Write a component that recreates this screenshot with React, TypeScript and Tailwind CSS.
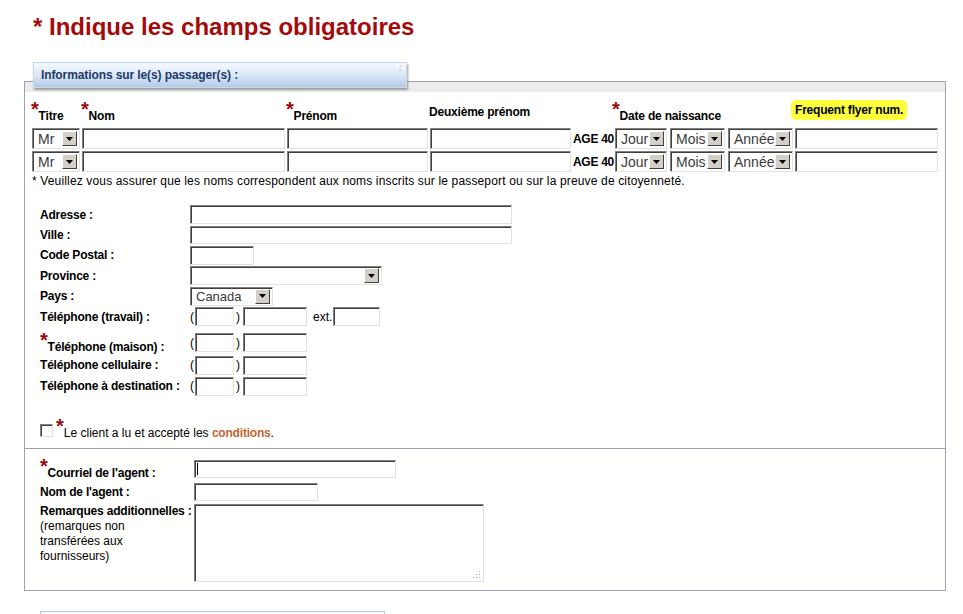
import React from 'react';

function Star() {
  return <span className="text-[#9b0a0a] font-bold text-[20px] leading-[14px] h-[14px]">*</span>;
}

function Req({ text, gap = 'mt-[7px]' }: { text: string; gap?: string }) {
  return (
    <div className="flex items-start whitespace-nowrap">
      <Star />
      <span className={gap}>{text}</span>
    </div>
  );
}

function Box({ className = '', caret = false }: { className?: string; caret?: boolean }) {
  return (
    <div
      className={`bg-white border border-t-[#808080] border-l-[#808080] border-r-[#e2e2e2] border-b-[#e2e2e2] shadow-[inset_1px_1px_0_#404040] ${className}`}
    >
      {caret && <div className="ml-[2px] mt-[2px] w-px h-[12px] bg-black" />}
    </div>
  );
}

function Arrow() {
  return (
    <div className="w-[15px] h-[15px] shrink-0 bg-[#d4d0c8] border border-t-white border-l-white border-r-[#404040] border-b-[#404040] flex items-center justify-center">
      <svg width="7" height="4" viewBox="0 0 7 4">
        <path d="M0 0h7L3.5 4z" fill="#000" />
      </svg>
    </div>
  );
}

function Sel({ className = '', text = '', size = 'text-[14px]' }: { className?: string; text?: string; size?: string }) {
  return (
    <div
      className={`flex items-center justify-between bg-white border border-t-[#808080] border-l-[#808080] border-r-[#e2e2e2] border-b-[#e2e2e2] shadow-[inset_1px_1px_0_#404040] pl-[5px] pr-[2px] font-normal tracking-normal text-[#3a3a3a] ${size} ${className}`}
    >
      <span className="leading-none">{text}</span>
      <Arrow />
    </div>
  );
}

function PassengerRow() {
  return (
    <div className="flex items-center h-[21px]">
      <Sel className="w-[48px] h-[21px]" text="Mr" />
      <Box className="ml-[2px] w-[203px] h-[21px]" />
      <Box className="ml-[2px] w-[141px] h-[21px]" />
      <Box className="ml-[2px] w-[141px] h-[21px]" />
      <span className="ml-[2px] w-[40px] font-bold text-[12px] tracking-[-0.3px] whitespace-nowrap">AGE 40</span>
      <Sel className="ml-[2px] w-[52px] h-[21px]" text="Jour" />
      <Sel className="ml-[3px] w-[55px] h-[21px]" text="Mois" />
      <Sel className="ml-[3px] w-[65px] h-[21px]" text="Année" />
      <Box className="ml-[2px] w-[143px] h-[21px]" />
    </div>
  );
}

function Phone({ ext = false }: { ext?: boolean }) {
  return (
    <div className="flex items-center font-normal tracking-normal">
      <span className="w-[5px] text-[12px]">(</span>
      <Box className="w-[39px] h-[19px]" />
      <span className="ml-[2px] w-[7px] text-[12px]">)</span>
      <Box className="w-[64px] h-[19px]" />
      {ext && (
        <>
          <span className="ml-[6px] w-[20px] text-[12px]">ext.</span>
          <Box className="w-[47px] h-[19px]" />
        </>
      )}
    </div>
  );
}

export default function App() {
  return (
    <div className="min-h-screen bg-white font-['Liberation_Sans',Arial,sans-serif] text-black text-[12px] leading-[14px]">
      <h1 className="pl-[33px] pt-[13px] text-[24px] leading-[28px] font-bold text-[#a30b0b]">
        * Indique les champs obligatoires
      </h1>

      <div className="relative z-10 mt-[21px] ml-[33px] w-[374px] h-[26px] -mb-[7px] flex items-center pl-[7px] bg-linear-to-b from-[#f3f9ff] via-[#dbe8f7] to-[#b4cbe6] border border-[#c9d7e6] shadow-[1px_2px_2px_rgba(0,0,0,0.35)]">
        <span className="font-bold text-[12px] tracking-[-0.1px] text-[#1d3a68]">Informations sur le(s) passager(s) :</span>
        <svg className="absolute right-[1px] top-[1px]" width="11" height="10" viewBox="0 0 11 10">
          <rect x="2" y="0" width="2" height="2" fill="#ffffff" />
          <rect x="6" y="1" width="2" height="2" fill="#d7e1ec" />
          <rect x="8" y="4" width="2" height="2" fill="#ffffff" />
          <rect x="5" y="5" width="2" height="2" fill="#c9d6e4" />
          <rect x="8" y="7" width="2" height="2" fill="#dfe7f0" />
        </svg>
      </div>

      <div className="ml-[24px] w-[922px] border border-[#9ea4ad]">
        <div className="h-[10px] bg-[#ececec]" />

        <div className="px-[7px]">
          <div className="flex h-[36px] font-bold tracking-[-0.2px]">
            <div className="w-[50px] pt-[10px] -ml-[1px]">
              <Req text="Titre" />
            </div>
            <div className="w-[205px] pt-[10px]">
              <Req text="Nom" />
            </div>
            <div className="w-[143px] pt-[10px]">
              <Req text="Prénom" />
            </div>
            <div className="w-[184px] pt-[13px]">Deuxième prénom</div>
            <div className="w-[180px] pt-[10px] -ml-[1px]">
              <Req text="Date de naissance" />
            </div>
            <div className="pt-[11px] -ml-[1px]">
              <span className="bg-[#ffff3c] px-[4px] py-[3px] rounded-[5px] whitespace-nowrap">Frequent flyer num.</span>
            </div>
          </div>
          <PassengerRow />
          <div className="mt-[2px]">
            <PassengerRow />
          </div>
          <p className="mt-[2px] text-[12px] tracking-[0.15px] leading-[14px]">
            * Veuillez vous assurer que les noms correspondent aux noms inscrits sur le passeport ou sur la preuve de citoyenneté.
          </p>
        </div>

        <div className="pl-[15px] mt-[16px] font-bold tracking-[-0.2px]">
          <div className="flex items-center h-[21px]">
            <span className="w-[150px]">Adresse :</span>
            <Box className="w-[322px] h-[19px]" />
          </div>
          <div className="flex items-center h-[20px]">
            <span className="w-[150px]">Ville :</span>
            <Box className="w-[322px] h-[18px]" />
          </div>
          <div className="flex items-center h-[20px]">
            <span className="w-[150px]">Code Postal :</span>
            <Box className="w-[64px] h-[19px]" />
          </div>
          <div className="flex items-center h-[21px]">
            <span className="w-[150px]">Province :</span>
            <Sel className="w-[192px] h-[19px]" />
          </div>
          <div className="flex items-center h-[20px]">
            <span className="w-[150px]">Pays :</span>
            <Sel className="w-[83px] h-[19px]" text="Canada" size="text-[13px]" />
          </div>
          <div className="flex items-center h-[21px]">
            <span className="w-[150px]">Téléphone (travail) :</span>
            <Phone ext />
          </div>
          <div className="flex items-end h-[27px]">
            <div className="w-[150px]">
              <Req text="Téléphone (maison) :" />
            </div>
            <div className="mb-[2px]">
              <Phone />
            </div>
          </div>
          <div className="flex items-center h-[22px]">
            <span className="w-[150px]">Téléphone cellulaire :</span>
            <Phone />
          </div>
          <div className="flex items-center h-[20px]">
            <span className="w-[150px] whitespace-nowrap">Téléphone à destination :</span>
            <Phone />
          </div>

          <div className="mt-[20px] mb-[8px] flex items-end h-[24px] font-normal tracking-normal">
            <div className="mb-[3px] w-[13px] h-[13px] bg-white border border-t-[#808080] border-l-[#808080] border-r-[#e2e2e2] border-b-[#e2e2e2] shadow-[inset_1px_1px_0_#404040]" />
            <div className="ml-[3px] flex items-start">
              <Star />
              <span className="mt-[7px]">
                Le client a lu et accepté les <span className="font-bold tracking-[-0.2px] text-[#c0672e]">conditions</span>.
              </span>
            </div>
          </div>
        </div>

        <div className="border-t border-[#9ea4ad] bg-[#fffffd] pl-[15px] pt-[7px] pb-[8px] font-bold tracking-[-0.2px]">
          <div className="flex items-end h-[24px]">
            <div className="w-[154px]">
              <Req text="Courriel de l'agent :" />
            </div>
            <Box className="mb-[2px] w-[202px] h-[18px]" caret />
          </div>
          <div className="flex items-center h-[24px]">
            <span className="w-[154px]">Nom de l'agent :</span>
            <Box className="w-[124px] h-[18px]" />
          </div>
          <div className="flex items-start">
            <div className="w-[154px] leading-[15px]">
              <span className="whitespace-nowrap">Remarques additionnelles :</span>
              <div className="font-normal tracking-normal">
                (remarques non
                <br />
                transférées aux
                <br />
                fournisseurs)
              </div>
            </div>
            <div className="relative w-[290px] h-[78px] bg-white border border-t-[#808080] border-l-[#808080] border-r-[#e2e2e2] border-b-[#e2e2e2] shadow-[inset_1px_1px_0_#404040]">
              <svg className="absolute right-[2px] bottom-[2px]" width="9" height="9" viewBox="0 0 9 9">
                <rect x="7" y="1" width="1" height="1" fill="#b0b0b0" />
                <rect x="4" y="4" width="1" height="1" fill="#b0b0b0" />
                <rect x="7" y="4" width="1" height="1" fill="#b0b0b0" />
                <rect x="1" y="7" width="1" height="1" fill="#b0b0b0" />
                <rect x="4" y="7" width="1" height="1" fill="#b0b0b0" />
                <rect x="7" y="7" width="1" height="1" fill="#b0b0b0" />
              </svg>
            </div>
          </div>
        </div>
      </div>

      <div className="mt-[20px] ml-[40px] w-[345px] h-[26px] border border-[#b9c6d4] bg-linear-to-b from-[#f8fbff] to-[#e2ebf5]" />
    </div>
  );
}
